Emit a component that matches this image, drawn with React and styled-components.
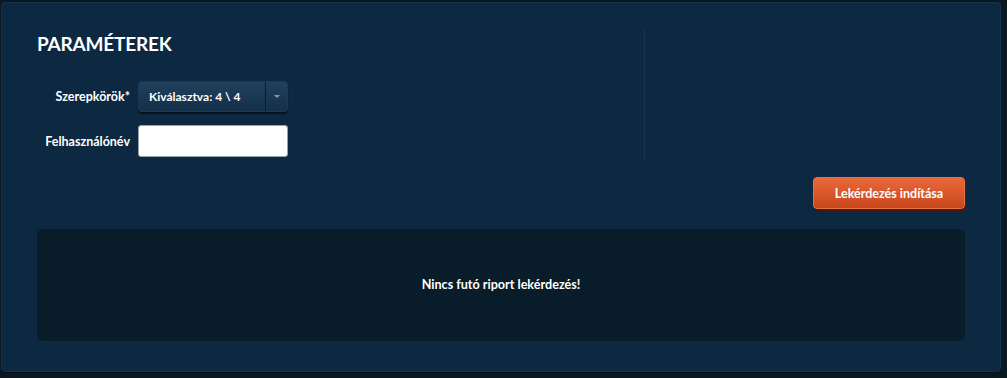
import React from 'react';
import styled, { createGlobalStyle } from 'styled-components';

const GlobalStyle = createGlobalStyle`
  html, body {
    margin: 0;
    padding: 0;
    background: #0a1824;
    font-family: Lato, "Noto Sans", sans-serif;
  }
`;

const Page = styled.div`
  padding: 2px 6px 6px 1px;
`;

const Panel = styled.div`
  box-sizing: border-box;
  width: 1000px;
  height: 370px;
  background: #0d2941;
  border: 1px solid #12334f;
  border-radius: 4px;
  box-shadow: 0 1px 0 #05101a;
  padding: 26px 35px 0 35px;
  display: flex;
  flex-direction: column;
`;

const Top = styled.div`
  display: flex;
  height: 133px;
`;

const LeftCol = styled.div`
  width: 607px;
  border-right: 1px solid #16344f;
`;

const Title = styled.h2`
  margin: 0;
  padding-top: 3px;
  color: #ffffff;
  font-size: 19px;
  line-height: 24px;
  font-weight: 700;
  letter-spacing: -0.2px;
`;

const Form = styled.div`
  margin-top: 25px;
  display: flex;
  flex-direction: column;
  gap: 13px;
`;

const Row = styled.div`
  display: flex;
  align-items: center;
  gap: 8px;
`;

const Label = styled.label`
  width: 93px;
  text-align: right;
  color: #ffffff;
  font-size: 12.5px;
  font-weight: 700;
`;

const Select = styled.div`
  box-sizing: border-box;
  width: 150px;
  height: 31px;
  display: flex;
  border-radius: 4px;
  background: linear-gradient(#20405c, #14304a);
  border: 1px solid #1d3a55;
  box-shadow: 0 2px 1px #07131d;
`;

const SelectText = styled.div`
  flex: 1;
  display: flex;
  align-items: center;
  padding-left: 10px;
  color: #ffffff;
  font-size: 12px;
  font-weight: 700;
`;

const Caret = styled.div`
  width: 21px;
  border-left: 1px solid #0b1d2c;
  display: flex;
  align-items: center;
  justify-content: center;
  &::after {
    content: '';
    border-left: 3px solid transparent;
    border-right: 3px solid transparent;
    border-top: 3px solid #8a9aa8;
  }
`;

const Input = styled.input`
  box-sizing: border-box;
  width: 150px;
  height: 32px;
  border: 1px solid #9aa3ab;
  border-radius: 3px;
  background: #ffffff;
  outline: none;
`;

const Actions = styled.div`
  display: flex;
  justify-content: flex-end;
  margin-top: 15px;
`;

const Button = styled.button`
  box-sizing: border-box;
  width: 152px;
  height: 32px;
  border: 1px solid #e7713f;
  border-radius: 4px;
  background: linear-gradient(#e8683b, #c9461d);
  box-shadow: 1px 2px 0 #4a1a0c;
  color: #ffffff;
  font-family: inherit;
  font-size: 12.5px;
  font-weight: 700;
`;

const Status = styled.div`
  margin-top: 20px;
  height: 112px;
  border-radius: 6px;
  background: #081c29;
  display: flex;
  align-items: center;
  justify-content: center;
  padding-bottom: 2px;
  box-sizing: border-box;
  color: #ffffff;
  font-size: 12.6px;
  font-weight: 700;
`;

export default function App() {
  return (
    <>
      <GlobalStyle />
      <Page>
        <Panel>
          <Top>
            <LeftCol>
              <Title>PARAMÉTEREK</Title>
              <Form>
                <Row>
                  <Label>Szerepkörök*</Label>
                  <Select>
                    <SelectText>Kiválasztva: 4 \ 4</SelectText>
                    <Caret />
                  </Select>
                </Row>
                <Row>
                  <Label>Felhasználónév</Label>
                  <Input type="text" />
                </Row>
              </Form>
            </LeftCol>
          </Top>
          <Actions>
            <Button>Lekérdezés indítása</Button>
          </Actions>
          <Status>Nincs futó riport lekérdezés!</Status>
        </Panel>
      </Page>
    </>
  );
}
